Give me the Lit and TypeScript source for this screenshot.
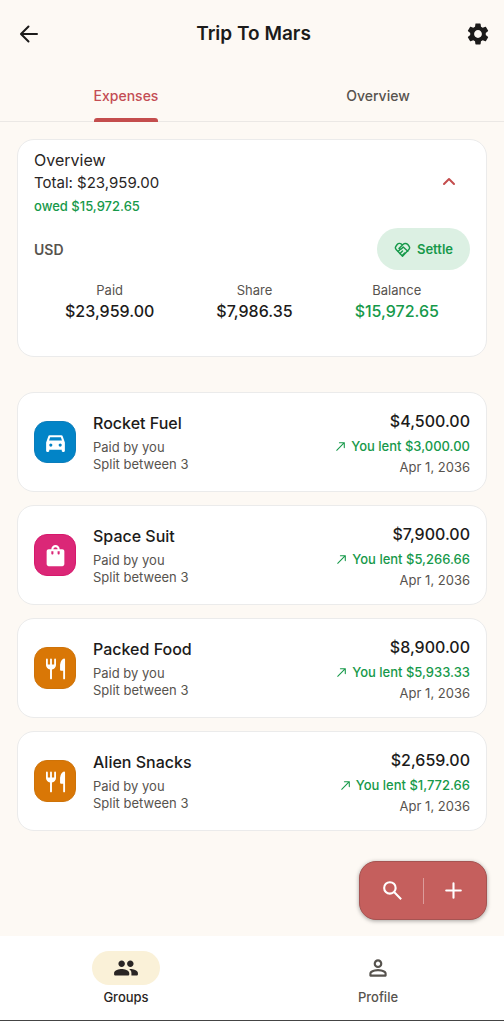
import { LitElement, html, css, svg, nothing } from "lit";
import { customElement, property, state } from "lit/decorators.js";
import { classMap } from "lit/directives/class-map.js";

const ICONS = {
  car: "M240-200v40q0 17-11.500 28.500T200-120h-40q-17 0-28.500-11.500T120-160v-320l84-240q6-18 21.500-29t34.500-11h440q19 0 34.500 11t21.500 29l84 240v320q0 17-11.500 28.500T800-120h-40q-17 0-28.500-11.500T720-160v-40H240Zm-8-360h496l-42-120H274l-42 120Zm68 240q25 0 42.500-17.500T360-380q0-25-17.500-42.500T300-440q-25 0-42.500 17.500T240-380q0 25 17.500 42.500T300-320Zm360 0q25 0 42.500-17.500T720-380q0-25-17.500-42.500T660-440q-25 0-42.500 17.500T600-380q0 25 17.500 42.500T660-320Z",
  bag: "M220-70q-33 0-56.500-23.500T140-150v-490q0-33 23.500-56.500T220-720h100q0-66 47-113t113-47q66 0 113 47t47 113h100q33 0 56.500 23.500T820-640v490q0 33-23.500 56.500T740-70H220Zm180-650h160q0-33-23.500-56.500T480-800q-33 0-56.500 23.500T400-720ZM600-520q17 0 28.500-11.500T640-560v-80h-80v80q0 17 11.500 28.500T600-520Zm-240 0q17 0 28.500-11.500T400-560v-80h-80v80q0 17 11.500 28.500T360-520Z",
  food: "M270-100v-345q-65-10-110-55t-45-110v-220q0-35 35-35t35 35v200h87v-200q0-35 35-35t35 35v200h87v-200q0-35 35-35t35 35v220q0 65-45 110t-110 55v345q0 35-37 35t-37-35ZM775-100v-290h-80q-40 0-40-40v-190q0-100 60-180 50-60 95-60 37 0 37 35v725q0 35-36 35t-36-35Z",
  search: "M784-120 532-372q-30 24-69 38t-83 14q-109 0-184.500-75.500T120-580q0-109 75.500-184.500T380-840q109 0 184.500 75.500T640-580q0 44-14 83t-38 69l252 252-56 56ZM380-400q75 0 127.500-52.500T560-580q0-75-52.500-127.500T380-760q-75 0-127.500 52.500T200-580q0 75 52.500 127.500T380-400Z",
  person: "M367-527q-47-47-47-113t47-113q47-47 113-47t113 47q47 47 47 113t-47 113q-47 47-113 47t-113-47ZM200-160q-40 0-40-40v-72q0-34 17.500-62.500T224-378q62-31 126-46.500T480-440q66 0 130 15.500T736-378q29 15 46.500 43.500T800-272v72q0 40-40 40H200Zm40-80h480v-32q0-11-5.500-20T700-306q-54-27-109-40.500T480-360q-56 0-111 13.500T260-306q-9 5-14.500 14t-5.500 20v32Zm296.500-343.500Q560-607 560-640t-23.500-56.500Q513-720 480-720t-56.500 23.500Q400-673 400-640t23.500 56.500Q447-560 480-560t56.500-23.500Z",
};
type IconName = keyof typeof ICONS;

const filled = (name: IconName, size: number) => html`
  <svg width=${size} height=${size} viewBox="0 -960 960 960" fill="currentColor" aria-hidden="true">
    <path d=${ICONS[name]}></path>
  </svg>`;

const solid = (size: number, d: string) => html`
  <svg width=${size} height=${size} viewBox="0 0 24 24" fill="currentColor" aria-hidden="true">
    <path d=${d}></path>
  </svg>`;

const stroked = (size: number, width: number, shapes: unknown) => html`
  <svg width=${size} height=${size} viewBox="0 0 24 24" fill="none" stroke="currentColor"
    stroke-width=${width} stroke-linecap="round" stroke-linejoin="round" aria-hidden="true">${shapes}</svg>`;

const GEAR = "M19.140 12.940c.04-.3.06-.61.06-.94 0-.32-.02-.64-.07-.94l2.030-1.580a.49.49 0 0 0 .12-.61l-1.920-3.320a.488.488 0 0 0-.59-.22l-2.390.96c-.5-.38-1.030-.7-1.620-.94l-.36-2.540a.484.484 0 0 0-.48-.41h-3.840c-.24 0-.43.17-.47.41l-.36 2.540c-.59.24-1.130.57-1.620.94l-2.390-.96c-.22-.08-.47 0-.59.22L2.740 8.870c-.12.21-.08.47.12.61l2.030 1.580c-.05.3-.09.63-.09.94s.02.64.07.94l-2.030 1.580a.49.49 0 0 0-.12.61l1.920 3.320c.12.22.37.29.59.22l2.390-.96c.5.38 1.030.7 1.620.94l.36 2.540c.05.24.24.41.48.41h3.840c.24 0 .44-.17.47-.41l.36-2.540c.59-.24 1.130-.56 1.620-.94l2.390.96c.22.08.47 0 .59-.22l1.920-3.320c.12-.22.07-.47-.12-.61l-2.010-1.580zM12 15.600c-1.980 0-3.600-1.620-3.600-3.600s1.620-3.600 3.600-3.600 3.600 1.620 3.600 3.600-1.620 3.600-3.600 3.600z";
const PEOPLE = "M16 11c1.660 0 2.990-1.340 2.990-3S17.660 5 16 5c-1.660 0-3 1.340-3 3s1.340 3 3 3zm-8 0c1.660 0 2.990-1.340 2.990-3S9.660 5 8 5C6.340 5 5 6.340 5 8s1.340 3 3 3zm0 2c-2.330 0-7 1.170-7 3.500V18q0 1 1 1h12q1 0 1-1v-1.500c0-2.330-4.670-3.500-7-3.500zm8 0c-.29 0-.62.02-.97.05 1.160.84 1.970 1.970 1.970 3.450V19h5q1 0 1-1v-1.500c0-2.330-4.670-3.500-7-3.500z";

const base = css`
  * { box-sizing: border-box; }
  button { font: inherit; color: inherit; border: 0; padding: 0; background: none; cursor: pointer; }
  svg { display: block; flex: none; }
  h1, h2, h3, p, dl, dd, ul { margin: 0; padding: 0; font-weight: 400; }
`;

interface Expense {
  title: string;
  icon: IconName;
  tone: "blue" | "pink" | "orange";
  amount: string;
  lent: string;
}

@customElement("expense-card")
class ExpenseCard extends LitElement {
  @property({ attribute: false }) expense!: Expense;

  static styles = [base, css`
    :host { display: block; }
    .card {
      display: flex; align-items: center; gap: 17px; min-height: 100px; padding: 0 16px;
      background: #fff; border: 1px solid #ebebeb; border-radius: 17px;
    }
    .badge {
      display: grid; place-items: center; width: 42px; height: 42px; flex: none;
      border-radius: 13px; color: #fff; border: 1px solid;
    }
    .blue { background: #0284c7; border-color: #0b7dbb; }
    .pink { background: #db2777; border-color: #d6186c; }
    .orange { background: #d97706; border-color: #ce7309; }
    .info { flex: 1; min-width: 0; }
    .title { font-size: 16px; line-height: 24px; font-weight: 500; color: #1c1b1a; margin-bottom: 4px; }
    .meta { font-size: 13px; line-height: 17px; color: #57534e; }
    .figures { text-align: right; }
    .amount { font-size: 16px; line-height: 24px; font-weight: 500; color: #1c1b1a; }
    .lent {
      display: flex; align-items: center; justify-content: flex-end; gap: 4px;
      font-size: 13px; line-height: 26px; font-weight: 500; color: #16994a;
    }
    .date { font-size: 13px; line-height: 16px; color: #57534e; }
  `];

  render() {
    const e = this.expense;
    return html`
      <article class="card">
        <span class=${classMap({ badge: true, [e.tone]: true })}>${filled(e.icon, 25)}</span>
        <div class="info">
          <h3 class="title">${e.title}</h3>
          <p class="meta">Paid by you</p>
          <p class="meta">Split between 3</p>
        </div>
        <div class="figures">
          <p class="amount">${e.amount}</p>
          <p class="lent">${stroked(13, 2, svg`<path d="M5 19 19 5M10 5h9v9"></path>`)}<span>You lent ${e.lent}</span></p>
          <p class="date">Apr 1, 2036</p>
        </div>
      </article>`;
  }
}

@customElement("overview-card")
class OverviewCard extends LitElement {
  @state() private open = true;

  static styles = [base, css`
    :host { display: block; }
    .card {
      background: #fff; border: 1px solid #ebebeb; border-radius: 17px; padding: 8px 16px 33px;
    }
    .top { display: flex; justify-content: space-between; align-items: center; }
    .heading { font-size: 16px; line-height: 24px; color: #292524; }
    .total { font-size: 15px; line-height: 22px; color: #292524; }
    .owed { font-size: 13px; line-height: 24px; font-weight: 500; color: #16994a; }
    .toggle { display: grid; place-items: center; width: 42px; height: 42px; padding-bottom: 4px; color: #c44d4d; }
    .closed svg { rotate: 180deg; }
    .currency { display: flex; justify-content: space-between; align-items: center; margin-top: 10px; }
    .code { font-size: 14px; font-weight: 600; color: #57534e; }
    .settle {
      display: flex; align-items: center; gap: 6px; height: 42px; padding: 0 17px;
      border-radius: 21px; background: #dcf0e3; color: #16994a; font-size: 13px; font-weight: 600;
    }
    .sums { display: flex; justify-content: space-around; margin-top: 11px; text-align: center; }
    .label { font-size: 13px; line-height: 18px; color: #57534e; }
    .value { font-size: 16px; line-height: 24px; font-weight: 500; color: #1c1b1a; }
    .positive { color: #16994a; }
  `];

  render() {
    return html`
      <section class="card">
        <div class="top">
          <div>
            <h2 class="heading">Overview</h2>
            <p class="total">Total: $23,959.00</p>
            <p class="owed">owed $15,972.65</p>
          </div>
          <button class=${classMap({ toggle: true, closed: !this.open })} aria-label="Toggle details"
            aria-expanded=${this.open} @click=${() => (this.open = !this.open)}>
            ${stroked(24, 2, svg`<path d="m7 15 5-5 5 5"></path>`)}
          </button>
        </div>
        ${this.open ? html`
          <div class="currency">
            <span class="code">USD</span>
            <button class="settle">
              ${stroked(17, 2, svg`
                <path d="M12 5.500C9.500 3 6.500 2.500 4.500 5L3 7c-1.500 2-1.500 3.500 0 5l9 9.500 9-9.500c1.500-1.500 1.500-3 0-5l-1.500-2C17 2.500 14 3.500 12 5.500l-5 5c1 1.500 2.500 1.500 4 0l2-2 6.500 6"></path>
                <path d="m6 14.500 3-3M8.500 17.500l3.500-3.500M12 20l3-3"></path>`)}
              Settle
            </button>
          </div>
          <dl class="sums">
            <div><dt class="label">Paid</dt><dd class="value">$23,959.00</dd></div>
            <div><dt class="label">Share</dt><dd class="value">$7,986.35</dd></div>
            <div><dt class="label">Balance</dt><dd class="value positive">$15,972.65</dd></div>
          </dl>` : nothing}
      </section>`;
  }
}

@customElement("app-root")
class AppRoot extends LitElement {
  @state() private tab = "Expenses";

  private expenses: Expense[] = [
    { title: "Rocket Fuel", icon: "car", tone: "blue", amount: "$4,500.00", lent: "$3,000.00" },
    { title: "Space Suit", icon: "bag", tone: "pink", amount: "$7,900.00", lent: "$5,266.66" },
    { title: "Packed Food", icon: "food", tone: "orange", amount: "$8,900.00", lent: "$5,933.33" },
    { title: "Alien Snacks", icon: "food", tone: "orange", amount: "$2,659.00", lent: "$1,772.66" },
  ];

  static styles = [base, css`
    :host {
      display: flex; flex-direction: column; min-height: 100vh; background: #fdf9f4;
      font-family: Inter, "Noto Sans", sans-serif; color: #1c1b1a; box-sizing: border-box;
    }
    .bar { display: grid; grid-template-columns: 42px 1fr 42px; align-items: center; height: 67px; padding: 0 5px 0 8px; }
    .bar button { display: grid; place-items: center; height: 42px; }
    .name { font-size: 19px; line-height: 24px; font-weight: 600; text-align: center; }
    .tabs { display: flex; height: 55px; border-bottom: 1px solid #ebe8e5; }
    .tab { flex: 1; display: flex; justify-content: center; font-size: 14px; font-weight: 500; color: #57534e; }
    .tab span { position: relative; display: flex; align-items: center; height: 55px; padding-top: 2px; }
    .current { color: #c44d54; }
    .current span::after {
      content: ""; position: absolute; left: 0; right: 0; bottom: 0; height: 4px;
      border-radius: 3px 3px 0 0; background: #c44d4d;
    }
    .main { flex: 1; position: relative; padding: 17px 17px 104px; }
    .list { list-style: none; display: grid; gap: 13px; margin-top: 35px; }
    .fab {
      position: absolute; right: 17px; bottom: 16px; display: flex; align-items: center;
      width: 128px; height: 59px; padding: 0 3px; border-radius: 17px; background: #c55f5d; color: #fff;
      border: 1px solid #a65452; box-shadow: 0 1px 4px rgb(0 0 0 / 35%);
    }
    .fab button { flex: 1; height: 100%; display: grid; place-items: center; }
    .rule { width: 1px; height: 26px; background: #dc9c9b; }
    .nav { display: flex; height: 85px; background: #fff; border-bottom: 1px solid #444; padding-top: 15px; }
    .item {
      flex: 1; display: flex; flex-direction: column; align-items: center; gap: 4px;
      font-size: 13px; line-height: 16px; font-weight: 500; color: #57534e; text-decoration: none;
    }
    .pill { display: grid; place-items: center; width: 68px; height: 34px; border-radius: 17px; }
    .active { color: #292524; }
    .active .pill { background: #faf1d8; }
  `];

  render() {
    return html`
      <header class="bar">
        <button aria-label="Back">${stroked(24, 2, svg`<path d="M20 12H4.500M11.500 4.500 4 12l7.500 7.500"></path>`)}</button>
        <h1 class="name">Trip To Mars</h1>
        <button aria-label="Settings">${solid(26, GEAR)}</button>
      </header>
      <div class="tabs" role="tablist">
        ${["Expenses", "Overview"].map((name) => html`
          <button role="tab" class=${classMap({ tab: true, current: this.tab === name })}
            aria-selected=${this.tab === name} @click=${() => (this.tab = name)}><span>${name}</span></button>`)}
      </div>
      <main class="main">
        <overview-card></overview-card>
        <ul class="list">
          ${this.expenses.map((e) => html`<li><expense-card .expense=${e}></expense-card></li>`)}
        </ul>
        <div class="fab">
          <button aria-label="Search">${filled("search", 25)}</button>
          <span class="rule"></span>
          <button aria-label="Add expense">${stroked(25, 2, svg`<path d="M12 5v14M5 12h14"></path>`)}</button>
        </div>
      </main>
      <nav class="nav">
        <a class="item active" href="#groups"><span class="pill">${solid(26, PEOPLE)}</span>Groups</a>
        <a class="item" href="#profile"><span class="pill">${filled("person", 26)}</span>Profile</a>
      </nav>`;
  }
}
